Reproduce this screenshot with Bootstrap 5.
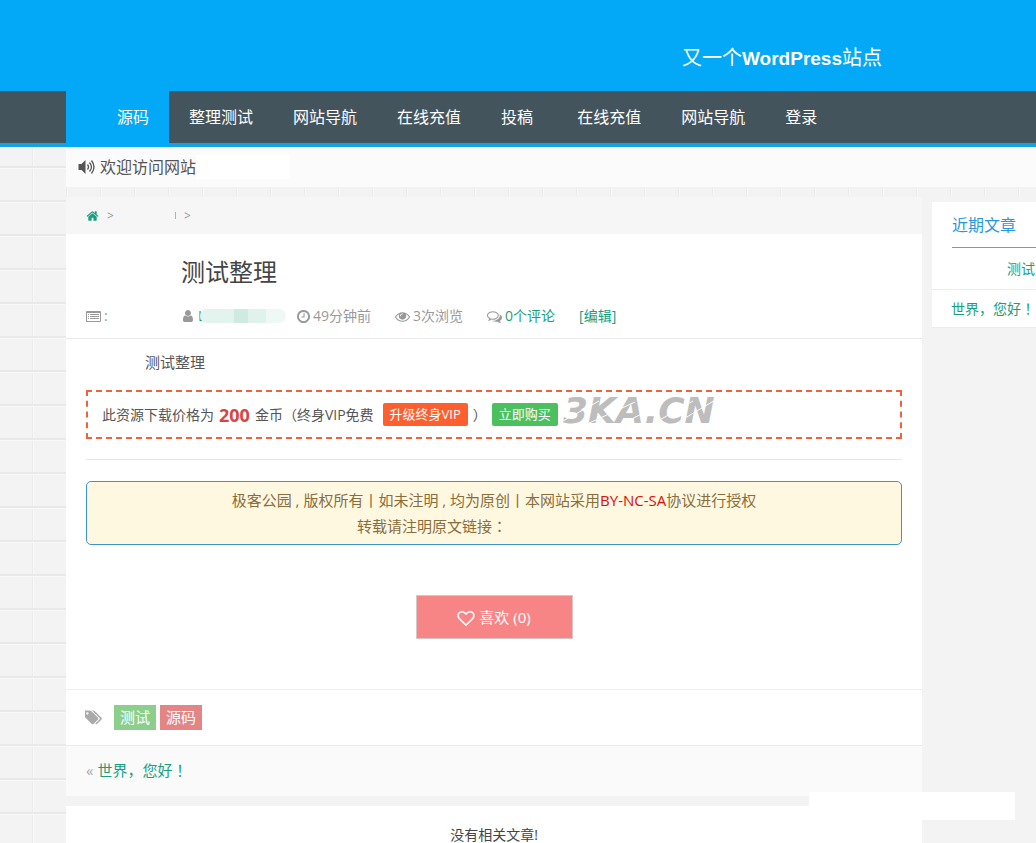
<!DOCTYPE html>
<html lang="zh-CN">
<head>
<meta charset="utf-8">
<meta name="viewport" content="width=device-width, initial-scale=1">
<title>测试整理 - 又一个WordPress站点</title>
<link rel="stylesheet" href="https://cdn.jsdelivr.net/npm/bootstrap@5.3.0/dist/css/bootstrap.min.css">
<style>
:root{--blue:#03a8f6;--green:#16a07d;--edge:#eaeaea;}
body{font-family:"Open Sans","Noto Sans CJK SC",sans-serif;font-size:14px;line-height:20px;color:#555;
  background-color:#f3f3f3;
  background-image:linear-gradient(#e9e9e9 2px,#f8f8f8 2px,#f8f8f8 3px,transparent 3px),linear-gradient(90deg,#ebebeb 1px,#f8f8f8 1px,#f8f8f8 2px,transparent 2px);
  background-size:34px 34px;background-position:32px 30px;}
a{color:var(--green);text-decoration:none}
svg{fill:currentColor;flex:none}
.page-indent{margin-left:66px}
.mid-punct{font-family:"Noto Sans CJK JP",sans-serif}
.site-head{background:var(--blue);height:91px;padding-right:154px}
.site-name{font-family:"Liberation Sans","Noto Sans CJK SC",sans-serif;font-size:20px;line-height:26px;color:#fff;margin-top:45px}
.site-name a{color:#fff}
.site-name b{font-size:19px}
.main-nav{background:#44545d;border-bottom:4px solid #17a0e2}
.main-nav .nav-link{color:#fff;font-size:16px;line-height:24px;padding:14px 20px}
.main-nav .nav-link.active{background:var(--blue);padding-left:51px;margin-bottom:-4px;padding-bottom:18px}
.notice{background:#fbfbfb;height:40px;font-size:16px;padding-left:11px}
.notice-pad{background:#fff;width:94px;height:24px}
.layout{margin-top:10px;background:#f3f3f3;min-height:calc(100vh - 197px)}
.crumbs{background:#f6f6f6;height:37px;padding:0 20px;color:#999;font-size:12px}
.crumb-blank{width:54px}
.crumb-blank::after{content:"";display:block;width:1px;height:7px;margin-left:auto;background:#7cc4e4}
.sheet{background:#fff}
.post-head{padding:22px 20px 0;border-bottom:1px solid var(--edge);height:105px}
.post-title{font-size:24px;font-weight:400;line-height:32px;color:#444;margin:0 0 0 95px}
.meta{color:#999;margin-top:17px;line-height:22px}
.meta svg{margin-right:3px}
.meta-cat{width:96px}
.meta-author{width:115px}
.smudge{width:86px;height:14px;border-radius:7px;margin-left:-5px;background:linear-gradient(90deg,#e3f3ee 0 34px,#cfeae1 34px 48px,#dff2ec 48px 66px,#eef8f5 66px)}
.post-body{padding:12px 20px 0}
.lead-in{font-size:15px;line-height:22px;margin:0 0 17px 59px}
.buy{border:2px dashed #f0623a;height:49px;padding:0 14px;gap:5px}
.price{color:#d9443f;font-size:18px}
.tag-btn{border:0;border-radius:2px;color:#fff;font-size:13px;line-height:23px;padding:0 7px}
.tag-orange{background:#ff5e2e}.tag-green{background:#4cc05f}
.stamp{font:italic bold 36px/36px "DejaVu Sans",sans-serif;color:#bdbdbd;left:475px;top:1px;white-space:nowrap}
.stamp svg{left:0;top:0}
.rule{border-top:1px solid #e8e8e8;margin:20px 0 21px}
.license{background:#fff8e1;border:1px solid #3f92d2;border-radius:5px;color:#8a6d3b;font-size:15px;line-height:26px;padding:5px 0}
.license a{color:#d8100c}
.license-src{padding-right:124px}
.like{background:#f88585;border:1px solid #d8c6c6;color:#fff;width:157px;height:44px;font-size:15px;margin:50px 0}
.tag-row{border-top:1px solid #f0f0f0;border-bottom:1px solid #ececec;padding:15px 20px 15px 19px;color:#aaa}
.tag-row a{color:#fff;font-size:15px;line-height:25px;padding:0 6px}
.tag-test{background:#8ccf8c}.tag-source{background:#e38585}
.prev{background:#fafafa;height:50px;padding:0 20px 2px;font-size:15px;color:#aaa}
.related{margin-top:10px;padding-top:21px;line-height:16px;color:#444;flex:1}
.side{width:104px;white-space:nowrap;overflow:hidden;margin:5px 0 0 10px;align-self:flex-start}
.side h2{font-size:16px;font-weight:400;line-height:46px;height:46px;color:#2a97dd;border-bottom:1px solid #6f9fb5;margin:0 0 0 20px}
.side li{padding:0 0 0 19px;border-bottom:1px solid #ededed}
.side li:first-child{line-height:41px;padding-left:75px}
.side li:last-child{line-height:36px}
.corner-pad{background:#fff;width:206px;height:28px;right:21px;bottom:23px}
</style>
</head>
<body>
<svg class="d-none">
 <symbol id="i-home" viewBox="0 0 1792 1792"><path d="M1472 992v480q0 26-19 45t-45 19h-384v-384h-256v384h-384q-26 0-45-19t-19-45v-480q0-1 .5-3t.5-3l575-474 575 474q1 2 1 6zm223-69l-62 74q-8 9-21 11h-3q-13 0-21-7l-692-577-692 577q-12 8-24 7-13-2-21-11l-62-74q-8-10-7-23.5t11-21.5l719-599q32-26 76-26t76 26l244 204v-195q0-14 9-23t23-9h192q14 0 23 9t9 23v408l219 182q10 8 11 21.5t-7 23.5z"/></symbol>
 <symbol id="i-user" viewBox="200 0 1400 1792"><path d="M1536 1399q0 109-62.5 187t-150.5 78h-854q-88 0-150.5-78t-62.5-187q0-85 8.5-160.5t31.5-152 58.5-131 94-89 134.5-34.5q131 128 313 128t313-128q76 0 134.5 34.5t94 89 58.5 131 31.5 152 8.5 160.5zm-256-887q0 159-112.5 271.5t-271.5 112.5-271.5-112.5-112.5-271.5 112.5-271.5 271.5-112.5 271.5 112.5 112.5 271.5z"/></symbol>
 <symbol id="i-clock" viewBox="128 128 1536 1536"><path d="M1024 544v448q0 14-9 23t-23 9h-320q-14 0-23-9t-9-23v-64q0-14 9-23t23-9h224v-352q0-14 9-23t23-9h64q14 0 23 9t9 23zm416 352q0-148-73-273t-198-198-273-73-273 73-198 198-73 273 73 273 198 198 273 73 273-73 198-198 73-273zm224 0q0 209-103 385.5t-279.5 279.5-385.5 103-385.5-103-279.5-279.5-103-385.5 103-385.5 279.5-279.5 385.5-103 385.5 103 279.5 279.5 103 385.5z"/></symbol>
 <symbol id="i-eye" viewBox="0 0 1792 1792"><path d="M1664 960q-152-236-381-353 61 104 61 225 0 185-131.5 316.5t-316.5 131.5-316.5-131.5-131.5-316.5q0-121 61-225-229 117-381 353 133 205 333.5 326.5t434.5 121.5 434.5-121.5 333.5-326.5zm-720-384q0-20-14-34t-34-14q-125 0-214.5 89.5t-89.5 214.5q0 20 14 34t34 14 34-14 14-34q0-86 61-147t147-61q20 0 34-14t14-34zm848 384q0 34-20 69-140 230-376.5 368.5t-499.5 138.5-499.5-139-376.5-368q-20-35-20-69t20-69q140-229 376.5-368t499.5-139 499.5 139 376.5 368q20 35 20 69z"/></symbol>
 <symbol id="i-comments" viewBox="0 0 1792 1792"><path d="M704 384q-153 0-286 52t-211.5 141-78.5 191q0 82 53 158t149 132l97 56-35 84q34-20 62-39l44-31 53 10q78 14 153 14 153 0 286-52t211.5-141 78.5-191-78.5-191-211.5-141-286-52zm0-128q191 0 353.5 68.5t256.5 186.5 94 257-94 257-256.5 186.5-353.5 68.5q-86 0-176-16-124 88-278 128-36 9-86 16h-3q-11 0-20.5-8t-11.5-21q-1-3-1-6.5t.5-6.5 2-6l2.5-5 3.5-5.5 4-5 4.5-5 4-4.5q5-6 23-25t26-29.5 22.5-29 25-38.5 20.5-44q-124-72-195-177t-71-224q0-139 94-257t256.5-186.5 353.5-68.5zm822 1169q10 24 20.5 44t25 38.5 22.5 29 26 29.5 23 25q1 1 4 4.5t4.5 5 4 5 3.5 5.5l2.5 5 2 6 .5 6.5-1 6.5q-3 14-13 22t-22 7q-50-7-86-16-154-40-278-128-90 16-176 16-271 0-472-132 58 4 88 4 161 0 309-45t264-129q125-92 192-212t67-254q0-77-23-152 129 71 204 178t75 230q0 120-71 224.5t-195 176.5z"/></symbol>
 <symbol id="i-heart" viewBox="0 0 1792 1792"><path stroke="currentColor" stroke-width="50" d="M1664 596q0-81-21.5-143t-55-98.5-81.5-59.5-94-31-98-8-112 25.5-110.5 64-86.5 72-60 61.5q-18 22-49 22t-49-22q-24-28-60-61.5t-86.5-72-110.5-64-112-25.5-98 8-94 31-81.5 59.5-55 98.5-21.5 143q0 168 187 355l581 560 580-559q188-188 188-356zm128 0q0 221-229 450l-623 600q-18 18-44 18t-44-18l-624-602q-10-8-27.5-26t-55.5-65.5-68-97.5-53.5-121-23.5-138q0-220 127-344t351-124q62 0 126.5 21.5t120 58 95.5 68.5 76 68q36-36 76-68t95.5-68.5 120-58 126.5-21.5q224 0 351 124t127 344z"/></symbol>
 <symbol id="i-tags" viewBox="0 0 1850 1792"><path d="M384 448q0-53-37.5-90.5t-90.5-37.5-90.5 37.5-37.5 90.5 37.5 90.5 90.5 37.5 90.5-37.5 37.5-90.5zm1067 576q0 53-37 90l-491 492q-39 37-91 37-53 0-90-37l-715-716q-38-37-64.5-101t-26.5-117v-416q0-52 38-90t90-38h416q53 0 117 26.5t102 64.5l715 714q37 39 37 91zm384 0q0 53-37 90l-491 492q-39 37-91 37-36 0-59-14t-53-45l470-470q37-37 37-90 0-52-37-91l-715-714q-38-38-102-64.5t-117-26.5h224q53 0 117 26.5t102 64.5l715 714q37 39 37 91z"/></symbol>
 <symbol id="i-list" viewBox="0 0 15 13"><path fill-rule="evenodd" d="M1 1h13q1 0 1 1v9q0 1-1 1H1q-1 0-1-1V2q0-1 1-1zm0 2v8h13V3zM2 4h1v1H2zm2 0h9v1H4zM2 6h1v1H2zm2 0h9v1H4zM2 8h1v1H2zm2 0h9v1H4z"/></symbol>
 <symbol id="i-sound" viewBox="0 0 18 16"><path d="M1 5h3l4-4v14l-4-4H1z"/><path d="M10 5.500q2 2.500 0 5M12 3.500q4 4.500 0 9M14 1.500q5 6.500 0 13" fill="none" stroke="currentColor" stroke-width="1.300"/></symbol>
</svg>

<header>
 <div class="site-head d-flex justify-content-end"><div class="site-name"><a href="#">又一个<b>WordPress</b>站点</a></div></div>
 <nav class="main-nav" aria-label="主导航">
  <ul class="nav flex-nowrap text-nowrap page-indent">
   <li class="nav-item"><a class="nav-link active" href="#">源码</a></li>
   <li class="nav-item"><a class="nav-link" href="#">整理测试</a></li>
   <li class="nav-item"><a class="nav-link" href="#">网站导航</a></li>
   <li class="nav-item"><a class="nav-link" href="#">在线充值</a></li>
   <li class="nav-item"><a class="nav-link" href="#">投稿&nbsp;</a></li>
   <li class="nav-item"><a class="nav-link" href="#">在线充值</a></li>
   <li class="nav-item"><a class="nav-link" href="#">网站导航</a></li>
   <li class="nav-item"><a class="nav-link" href="#">登录</a></li>
  </ul>
 </nav>
</header>

<div class="page-indent">
 <div class="notice d-flex align-items-center"><svg class="me-1" width="19" height="16"><use href="#i-sound"/></svg><span>欢迎访问网站</span><span class="notice-pad"></span></div>
 <div class="layout d-flex">
  <main class="flex-grow-1 d-flex flex-column">
   <nav class="crumbs d-flex align-items-center gap-2" aria-label="当前位置"><a class="d-flex" href="#" aria-label="首页"><svg width="13" height="14"><use href="#i-home"/></svg></a><span>&gt;</span><span class="crumb-blank"></span><span>&gt;</span></nav>
   <article class="sheet">
    <header class="post-head">
     <h1 class="post-title">测试整理</h1>
     <div class="meta d-flex align-items-center text-nowrap">
      <span class="meta-cat d-flex align-items-center"><svg width="15" height="13"><use href="#i-list"/></svg>:</span>
      <span class="meta-author d-flex align-items-center"><svg class="me-1" width="12" height="14"><use href="#i-user"/></svg><a href="#">L</a><span class="smudge"></span></span>
      <span class="d-flex align-items-center me-4"><svg width="13" height="13"><use href="#i-clock"/></svg>49分钟前</span>
      <span class="d-flex align-items-center me-4"><svg width="15" height="15"><use href="#i-eye"/></svg>3次浏览</span>
      <span class="d-flex align-items-center me-4"><svg width="15" height="15"><use href="#i-comments"/></svg><a href="#">0个评论</a></span>
      <a href="#">[编辑]</a>
     </div>
    </header>
    <div class="post-body">
     <p class="lead-in">测试整理</p>
     <div class="buy d-flex align-items-center position-relative text-nowrap">
      <span>此资源下载价格为</span><b class="price">200</b><span>金币（终身VIP免费</span>
      <button class="tag-btn tag-orange ms-1" type="button">升级终身VIP</button><span>）</span>
      <button class="tag-btn tag-green" type="button">立即购买</button>
      <span class="stamp position-absolute">3KA.CN<svg class="position-absolute" width="160" height="36" aria-hidden="true"><path d="M0 28L36 8M22 32L72 9M55 33L100 10M86 33L130 8M112 31L154 6" stroke="#fff" stroke-width="1"/></svg></span>
     </div>
     <div class="rule"></div>
     <div class="license text-center">极客公园 , 版权所有丨如未注明 , 均为原创丨本网站采用<a href="#">BY-NC-SA</a>协议进行授权<br><span class="license-src d-inline-block">转载请注明原文链接<span class="mid-punct" lang="ja">：</span></span></div>
     <div class="text-center"><button class="like" type="button"><svg class="me-1" width="18" height="17"><use href="#i-heart"/></svg>喜欢 (0)</button></div>
    </div>
    <div class="tag-row d-flex align-items-center gap-1"><svg class="me-2" width="17" height="17"><use href="#i-tags"/></svg><a class="tag-test" href="#">测试</a><a class="tag-source" href="#">源码</a></div>
    <div class="prev d-flex align-items-center"><span class="me-1">«</span><a href="#">世界，您好<span class="mid-punct" lang="ja">！</span></a></div>
   </article>
   <section class="sheet related text-center">没有相关文章!</section>
  </main>
  <aside class="side sheet">
   <h2>近期文章</h2>
   <ul class="list-unstyled mb-0"><li><a href="#">测试</a></li><li><a href="#">世界，您好<span class="mid-punct" lang="ja">！</span></a></li></ul>
  </aside>
 </div>
</div>
<div class="corner-pad position-fixed"></div>
<script src="https://cdn.jsdelivr.net/npm/bootstrap@5.3.0/dist/js/bootstrap.bundle.min.js"></script>
</body>
</html>
